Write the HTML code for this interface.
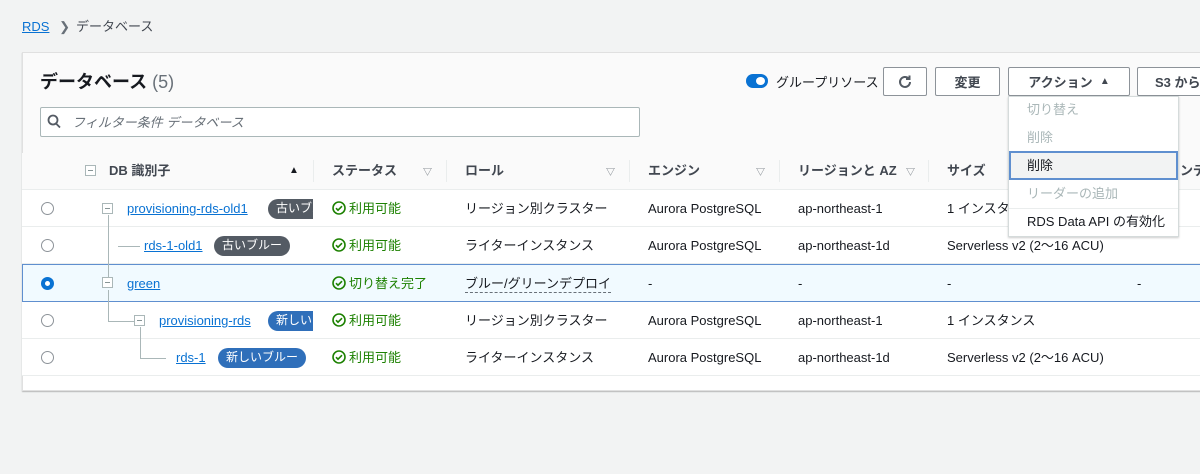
<!DOCTYPE html>
<html><head><meta charset="utf-8"><style>
*{box-sizing:border-box;margin:0;padding:0}
body{width:1200px;height:474px;background:#f2f3f3;font-family:"Liberation Sans","Noto Sans CJK JP",sans-serif;font-size:13px;color:#16191f;position:relative;overflow:hidden}
.abs{position:absolute}
a{color:#0972d3;text-decoration:underline}
.panel{position:absolute;left:22px;top:52px;width:1200px;height:339px;background:#fafafa;border:1px solid #e0e0e0;box-shadow:0 1px 1px rgba(0,0,0,.25)}
.btn{position:absolute;top:67px;height:29px;border:1px solid #8d9399;background:#fff;font-weight:bold;font-size:13px;color:#414750;display:flex;align-items:center;justify-content:center;border-radius:2px}
.hdr{position:absolute;top:153px;left:22px;width:1200px;height:37px;background:#fafafa;border-bottom:1px solid #eaeded}
.row{position:absolute;left:22px;width:1200px;height:37px;background:#fff;border-bottom:1px solid #eaeded}
.t{position:absolute;white-space:nowrap;font-size:13px;line-height:16px}
.j{margin-top:0}
.h{position:absolute;white-space:nowrap;font-weight:bold;font-size:13px;color:#414750;top:163px;line-height:16px}
.tri{position:absolute;top:165px;font-size:9px;color:#687078}
.sep{position:absolute;top:160px;width:1px;height:22px;background:#eaeded}
.radio{position:absolute;left:41px;width:13px;height:13px;border:1px solid #8d9399;border-radius:50%;background:#fff}
.box{position:absolute;width:11px;height:11px;border:1px solid #aab7b8;background:#fff}
.box:after{content:"";position:absolute;left:2px;top:4px;width:5px;height:1px;background:#879596}
.badge{position:absolute;height:20px;border-radius:10px;color:#fff;font-size:12px;padding:0 8px;line-height:19px;white-space:nowrap;overflow:hidden}
.ok{color:#1d8102}
.ok svg{vertical-align:-2px;margin-right:3px}
.ln{position:absolute;background:#aab7b8}
.menu{position:absolute;left:1008px;top:96px;width:171px;height:141px;background:#fff;border:1px solid #d5dbdb;box-shadow:0 1px 2px rgba(0,0,0,.2)}
.mi{position:absolute;left:18px;font-size:13px;white-space:nowrap;line-height:16px}
</style></head><body>
<div class="abs" style="left:22px;top:16px;font-size:13px"><a style="color:#0972d3">RDS</a> <span style="color:#687078;margin:0 6px">&#x276F;</span><span style="color:#414750">データベース</span></div>
<div class="panel"></div>
<div class="abs" style="left:40px;top:68px;font-size:18px;font-weight:bold">データベース <span style="font-weight:normal;color:#687078">(5)</span></div>
<div class="abs" style="left:40px;top:107px;width:600px;height:30px;border:1px solid #aab7b8;background:#fff;border-radius:2px"></div>
<svg class="abs" style="left:47px;top:114px" width="14" height="15" viewBox="0 0 14 15"><circle cx="6" cy="6" r="4.5" fill="none" stroke="#545b64" stroke-width="1.8"/><path d="M9 9.5l4 4" stroke="#545b64" stroke-width="1.8"/></svg>
<div class="abs" style="left:72px;top:112px;color:#687078;font-style:italic;font-size:13px">フィルター条件 データベース</div>
<div class="abs" style="left:746px;top:74px;width:22px;height:14px;border-radius:7px;background:#0972d3"></div>
<div class="abs" style="left:756px;top:77px;width:9px;height:8px;border-radius:50%;background:#fff"></div>
<div class="abs" style="left:776px;top:72px;font-size:13px;color:#16191f">グループリソース</div>
<div class="btn" style="left:883px;width:44px"><svg width="16" height="16" viewBox="0 0 16 16"><path d="M13 8a5 5 0 1 1-1.5-3.6" fill="none" stroke="#545b64" stroke-width="2"/><path d="M12.5 1.5v3.5h-3.5" fill="none" stroke="#545b64" stroke-width="2"/></svg></div>
<div class="btn" style="left:935px;width:65px">変更</div>
<div class="btn" style="left:1008px;width:122px">アクション&nbsp;&nbsp;<span style="font-size:10px">▲</span></div>
<div class="btn" style="left:1137px;width:80px;justify-content:flex-start;padding-left:17px">S3 から</div>

<div class="hdr"></div>
<div class="box" style="left:85px;top:165px"></div>
<div class="h" style="left:109px">DB 識別子</div><div class="tri" style="left:289px;color:#16191f;font-size:10px">▲</div>
<div class="sep" style="left:313px"></div>
<div class="h" style="left:332px">ステータス</div><div class="tri" style="left:423px">▽</div>
<div class="sep" style="left:446px"></div>
<div class="h" style="left:465px">ロール</div><div class="tri" style="left:606px">▽</div>
<div class="sep" style="left:629px"></div>
<div class="h" style="left:648px">エンジン</div><div class="tri" style="left:756px">▽</div>
<div class="sep" style="left:779px"></div>
<div class="h" style="left:798px">リージョンと AZ</div><div class="tri" style="left:906px">▽</div>
<div class="sep" style="left:928px"></div>
<div class="h" style="left:947px">サイズ</div>
<div class="h" style="left:1180px">ンデ</div>

<div class="row" style="top:190px"></div>
<div class="row" style="top:227px"></div>
<div class="row" style="top:264px;height:38px;background:#f1faff;border:1px solid #5f8fcf;left:22px"></div>
<div class="row" style="top:302px"></div>
<div class="row" style="top:339px"></div>

<div class="ln" style="left:108px;top:215px;width:1px;height:62px"></div>
<div class="ln" style="left:118px;top:246px;width:22px;height:1px"></div>
<div class="ln" style="left:108px;top:290px;width:1px;height:31px"></div>
<div class="ln" style="left:108px;top:321px;width:26px;height:1px"></div>
<div class="ln" style="left:140px;top:327px;width:1px;height:31px"></div>
<div class="ln" style="left:140px;top:358px;width:26px;height:1px"></div>

<div class="radio" style="top:202px"></div>
<div class="box" style="left:102px;top:203px"></div>
<a class="t" style="left:127px;top:201px">provisioning-rds-old1</a>
<div class="badge" style="left:268px;top:199px;width:45px;background:#545b64;border-radius:10px 0 0 10px">古いブル</div>
<div class="t ok j" style="left:332px;top:201px"><svg width="14" height="14" viewBox="0 0 14 14"><circle cx="7" cy="7" r="6" fill="none" stroke="#1d8102" stroke-width="1.6"/><path d="M4 7.2l2 2 4-4" fill="none" stroke="#1d8102" stroke-width="1.6"/></svg>利用可能</div>
<div class="t j" style="left:465px;top:201px">リージョン別クラスター</div>
<div class="t" style="left:648px;top:201px">Aurora PostgreSQL</div>
<div class="t" style="left:798px;top:201px">ap-northeast-1</div>
<div class="t j" style="left:947px;top:201px">1 インスタ</div>

<div class="radio" style="top:239px"></div>
<a class="t" style="left:144px;top:238px">rds-1-old1</a>
<div class="badge" style="left:214px;top:236px;background:#545b64">古いブルー</div>
<div class="t ok j" style="left:332px;top:238px"><svg width="14" height="14" viewBox="0 0 14 14"><circle cx="7" cy="7" r="6" fill="none" stroke="#1d8102" stroke-width="1.6"/><path d="M4 7.2l2 2 4-4" fill="none" stroke="#1d8102" stroke-width="1.6"/></svg>利用可能</div>
<div class="t j" style="left:465px;top:238px">ライターインスタンス</div>
<div class="t" style="left:648px;top:238px">Aurora PostgreSQL</div>
<div class="t" style="left:798px;top:238px">ap-northeast-1d</div>
<div class="t j" style="left:947px;top:238px">Serverless v2 (2〜16 ACU)</div>

<div class="radio" style="top:277px;border:4px solid #0972d3"></div>
<div class="box" style="left:102px;top:277px"></div>
<a class="t" style="left:127px;top:276px">green</a>
<div class="t ok j" style="left:332px;top:276px"><svg width="14" height="14" viewBox="0 0 14 14"><circle cx="7" cy="7" r="6" fill="none" stroke="#1d8102" stroke-width="1.6"/><path d="M4 7.2l2 2 4-4" fill="none" stroke="#1d8102" stroke-width="1.6"/></svg>切り替え完了</div>
<div class="t j" style="left:465px;top:276px;border-bottom:1px dashed #687078">ブルー/グリーンデプロイ</div>
<div class="t" style="left:648px;top:276px">-</div>
<div class="t" style="left:798px;top:276px">-</div>
<div class="t" style="left:947px;top:276px">-</div>
<div class="t" style="left:1137px;top:276px">-</div>

<div class="radio" style="top:314px"></div>
<div class="box" style="left:134px;top:315px"></div>
<a class="t" style="left:159px;top:313px">provisioning-rds</a>
<div class="badge" style="left:268px;top:311px;width:45px;background:#2f6fba;border-radius:10px 0 0 10px">新しいブ</div>
<div class="t ok j" style="left:332px;top:313px"><svg width="14" height="14" viewBox="0 0 14 14"><circle cx="7" cy="7" r="6" fill="none" stroke="#1d8102" stroke-width="1.6"/><path d="M4 7.2l2 2 4-4" fill="none" stroke="#1d8102" stroke-width="1.6"/></svg>利用可能</div>
<div class="t j" style="left:465px;top:313px">リージョン別クラスター</div>
<div class="t" style="left:648px;top:313px">Aurora PostgreSQL</div>
<div class="t" style="left:798px;top:313px">ap-northeast-1</div>
<div class="t j" style="left:947px;top:313px">1 インスタンス</div>

<div class="radio" style="top:351px"></div>
<a class="t" style="left:176px;top:350px">rds-1</a>
<div class="badge" style="left:218px;top:348px;background:#2f6fba">新しいブルー</div>
<div class="t ok j" style="left:332px;top:350px"><svg width="14" height="14" viewBox="0 0 14 14"><circle cx="7" cy="7" r="6" fill="none" stroke="#1d8102" stroke-width="1.6"/><path d="M4 7.2l2 2 4-4" fill="none" stroke="#1d8102" stroke-width="1.6"/></svg>利用可能</div>
<div class="t j" style="left:465px;top:350px">ライターインスタンス</div>
<div class="t" style="left:648px;top:350px">Aurora PostgreSQL</div>
<div class="t" style="left:798px;top:350px">ap-northeast-1d</div>
<div class="t j" style="left:947px;top:350px">Serverless v2 (2〜16 ACU)</div>
<div class="abs" style="left:23px;top:376px;width:1200px;height:14px;background:#fff"></div>

<div class="menu">
<div class="mi" style="top:5px;color:#aab7b8">切り替え</div>
<div class="mi" style="top:33px;color:#aab7b8">削除</div>
<div style="position:absolute;left:0;top:54px;width:169px;height:29px;background:#f2f3f3;border:2px solid #5f8fcf"></div>
<div class="mi" style="top:61px">削除</div>
<div class="mi" style="top:89px;color:#aab7b8">リーダーの追加</div>
<div style="position:absolute;left:0;top:111px;width:169px;height:1px;background:#eaeded"></div>
<div class="mi" style="top:117px">RDS Data API の有効化</div>
</div>
</body></html>
